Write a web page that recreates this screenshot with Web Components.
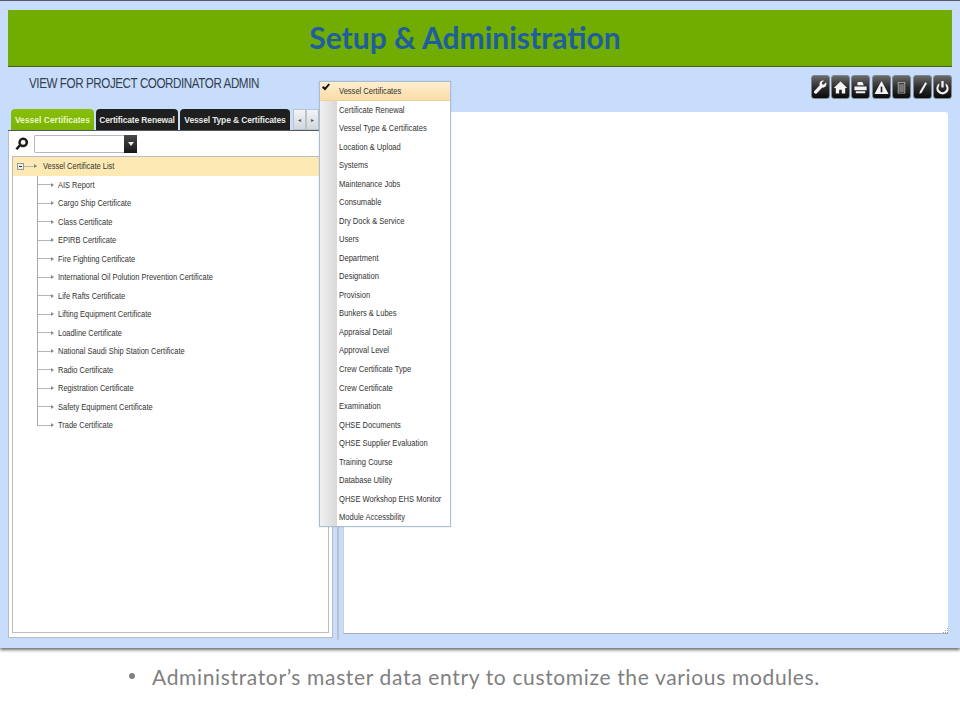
<!DOCTYPE html>
<html>
<head>
<meta charset="utf-8">
<title>Setup &amp; Administration</title>
<style>
  html, body { margin: 0; background: #fff; }
  body { font-family: "Liberation Sans", Arial, sans-serif; }
</style>
</head>
<body>
<admin-slide>
  <admin-toolbar slot="toolbar" label="VIEW FOR PROJECT COORDINATOR ADMIN"></admin-toolbar>
  <cert-panel slot="left">
    <tab-item slot="tabs" active>Vessel Certificates</tab-item>
    <tab-item slot="tabs" w="82">Certificate Renewal</tab-item>
    <tab-item slot="tabs" w="110">Vessel Type &amp; Certificates</tab-item>
    <tree-node root>Vessel Certificate List</tree-node>
    <tree-node>AIS Report</tree-node>
    <tree-node>Cargo Ship Certificate</tree-node>
    <tree-node>Class Certificate</tree-node>
    <tree-node>EPIRB Certificate</tree-node>
    <tree-node>Fire Fighting Certificate</tree-node>
    <tree-node>International Oil Polution Prevention Certificate</tree-node>
    <tree-node>Life Rafts Certificate</tree-node>
    <tree-node>Lifting Equipment Certificate</tree-node>
    <tree-node>Loadline Certificate</tree-node>
    <tree-node>National Saudi Ship Station Certificate</tree-node>
    <tree-node>Radio Certificate</tree-node>
    <tree-node>Registration Certificate</tree-node>
    <tree-node>Safety Equipment Certificate</tree-node>
    <tree-node last>Trade Certificate</tree-node>
  </cert-panel>
  <module-menu slot="menu">
    <menu-row checked>Vessel Certificates</menu-row>
    <menu-row>Certificate Renewal</menu-row>
    <menu-row>Vessel Type &amp; Certificates</menu-row>
    <menu-row>Location &amp; Upload</menu-row>
    <menu-row>Systems</menu-row>
    <menu-row>Maintenance Jobs</menu-row>
    <menu-row>Consumable</menu-row>
    <menu-row>Dry Dock &amp; Service</menu-row>
    <menu-row>Users</menu-row>
    <menu-row>Department</menu-row>
    <menu-row>Designation</menu-row>
    <menu-row>Provision</menu-row>
    <menu-row>Bunkers &amp; Lubes</menu-row>
    <menu-row>Appraisal Detail</menu-row>
    <menu-row>Approval Level</menu-row>
    <menu-row>Crew Certificate Type</menu-row>
    <menu-row>Crew Certificate</menu-row>
    <menu-row>Examination</menu-row>
    <menu-row>QHSE Documents</menu-row>
    <menu-row>QHSE Supplier Evaluation</menu-row>
    <menu-row>Training Course</menu-row>
    <menu-row>Database Utility</menu-row>
    <menu-row>QHSE Workshop EHS Monitor</menu-row>
    <menu-row>Module Accessbility</menu-row>
  </module-menu>
</admin-slide>

<script>
class AdminSlide extends HTMLElement {
    constructor() {
        super();
        this.attachShadow({ mode: "open" });
        this.shadowRoot.innerHTML = `
        <style>
          :host { display: block; width: 960px; height: 720px; overflow: hidden; position: relative; }
          .window {
            box-sizing: border-box;
            height: 648px;
            padding: 9px 8px 0;
            background: #c7ddfb;
            border-top: 1px solid #55585c;
            box-shadow: 0 2px 3px rgba(60,60,60,.75);
          }
          .banner {
            box-sizing: border-box;
            height: 57px;
            background: #70ad00;
            border-bottom: 1px solid #47630f;
            display: flex;
            align-items: center;
            justify-content: center;
            color: #1f5e9e;
            font: bold 30px Lato, sans-serif;
            padding: 0 30px 2px 0;
          }
          .work { display: grid; grid-template-columns: 325px 10px 605px; }
          .split { justify-self: center; width: 2px; height: 532px; margin-top: -1px; background: #b9c3cf; }
          .right {
            box-sizing: border-box;
            height: 522px;
            margin-top: 3px;
            background: #fff;
            border-left: 1px solid #c9d0d8;
            border-bottom: 1px solid #a9adb2;
            border-radius: 3px 3px 0 0;
            display: flex;
            align-items: flex-end;
            justify-content: flex-end;
          }
          .right svg { width: 5px; height: 5px; fill: #9a9ea3; }
          .caption {
            display: flex;
            align-items: center;
            height: 24px;
            margin-top: 16px;
            padding-left: 129px;
            color: #7f7f7f;
            font: 21px Lato, sans-serif;
            letter-spacing: .65px;
          }
          .caption i { width: 6px; height: 6px; border-radius: 50%; background: #808080; margin-right: 17px; }
        </style>
        <div class="window">
          <div class="banner">Setup &amp; Administration</div>
          <slot name="toolbar"></slot>
          <div class="work">
            <slot name="left"></slot>
            <div class="split"></div>
            <div class="right"><svg viewBox="0 0 5 5"><path d="M4 0h1v1H4zM2 2h1v1H2zM4 2h1v1H4zM0 4h1v1H0zM2 4h1v1H2zM4 4h1v1H4z"/></svg></div>
          </div>
        </div>
        <div class="caption"><i></i><span>Administrator’s master data entry to customize the various modules.</span></div>
        <slot name="menu"></slot>
      `;
    }
}

class AdminToolbar extends HTMLElement {
    constructor() {
        super();
        this.attachShadow({ mode: "open" });
        const icons = [
            // wrench
            '<path d="M14 2.500 11.300 5 9.800 4.600 9.300 3 11.800 .6C9.400 0 7 1.700 7 4.200c0 .5.1 1 .2 1.300L1.700 11.500c-.8.8-.8 1.900-.1 2.600s1.800.7 2.600-.1l5.700-6c2.700.8 5.200-2 4.100-5.500z"/>',
            // home
            '<path d="M8 1.500 .8 8.500h2.200v6h3.600V10.500h2.800v4H13v-6h2.200z"/>',
            // tray printer
            '<path d="M5 2h5l1.500 3.500H4.500zM1.500 7h13v4h-13zM3 12h10v2H3z"/>',
            // warning
            '<path d="M8 1 15.500 15H.5zM7.100 7v6h1.800V7z" fill-rule="evenodd"/>',
            // document
            '<path d="M4 2h8v12.500H4zM5 3v10.500h6V3z" fill-rule="evenodd" fill="#b0b0b0"/><path d="M5.500 4.500h5v8.500h-5z" fill="#777"/>',
            // pencil
            '<path d="M11 2.500 12.800 3.500 7 13.500 4.800 15 5 12.500z"/>',
            // power
            '<path d="M6.800 1h2.400v7H6.800zM4.600 3.400v2.700a4.200 4.200 0 1 0 6.800 0V3.400a6.500 6.500 0 1 1-6.800 0z"/>',
        ];
        this.shadowRoot.innerHTML = `
        <style>
          :host { display: flex; justify-content: space-between; align-items: flex-start; height: 42px; }
          .label {
            margin: 8px 0 0 21px;
            color: #33404f;
            font: 14px/16px "Liberation Sans", sans-serif;
            letter-spacing: -.5px;
            white-space: nowrap;
            transform: scaleX(.83);
            transform-origin: left center;
          }
          .btns { display: flex; gap: 1.400px; padding-top: 8px; }
          .btn {
            box-sizing: border-box;
            width: 19px;
            height: 24px;
            display: flex;
            align-items: center;
            justify-content: center;
            background: linear-gradient(#6a6a6a, #2e2e2e 50%, #0a0a0a);
            border-radius: 3px;
            border: 1px solid #7e8690;
          }
          svg { width: 15px; height: 15px; fill: #f4f4f4; flex: none; }
        </style>
        <div class="label"></div>
        <div class="btns">${icons.map((d) => `<span class="btn"><svg viewBox="0 0 16 16">${d}</svg></span>`).join("")}</div>
      `;
        this.shadowRoot.querySelector(".label").textContent = this.getAttribute("label") || "";
    }
}

class TabItem extends HTMLElement {
    constructor() {
        super();
        this.attachShadow({ mode: "open" });
        this.shadowRoot.innerHTML = `
        <style>
          :host {
            box-sizing: border-box;
            display: flex;
            align-items: center;
            justify-content: center;
            height: 21px;
            flex: none;
            white-space: nowrap;
            color: #e6e6e6;
            background: #1f1f1f;
            border-radius: 4px 4px 0 0;
            font: bold 8.500px "Liberation Sans", sans-serif;
            letter-spacing: -.15px;
          }
          :host([active]) { background: linear-gradient(#88bf0c, #7ab404); color: #e9f6c4; width: 83px; letter-spacing: 0; }
        </style>
        <slot></slot>
      `;
    }
    connectedCallback() {
        if (this.hasAttribute("w")) this.style.width = this.getAttribute("w") + "px";
    }
}

class CertPanel extends HTMLElement {
    constructor() {
        super();
        this.attachShadow({ mode: "open" });
        this.shadowRoot.innerHTML = `
        <style>
          :host { display: block; height: 530px; }
          .strip {
            box-sizing: border-box;
            display: flex;
            gap: 2px;
            height: 22px;
            padding-left: 3px;
            border-bottom: 1px solid #555a60;
          }
          .strip slot { display: contents; }
          .scroll { display: flex; margin-left: 1px; height: 21px; }
          .scroll b {
            box-sizing: border-box;
            width: 13px;
            display: flex;
            align-items: center;
            justify-content: center;
            background: linear-gradient(#f2f4f6, #d2d7dc);
            border: 1px solid #bcc3ca;
            color: #555;
            font: 6px "DejaVu Sans", sans-serif;
          }
          .body {
            box-sizing: border-box;
            height: 507px;
            background: #fff;
            border: 1px solid #b9bdc2;
            border-top: 0;
            padding: 0 3px 4px;
            display: flex;
            flex-direction: column;
          }
          .search { display: flex; align-items: center; height: 25px; flex: none; padding-left: 3px; }
          .search svg { width: 13px; height: 14px; fill: #1d1d1d; margin-right: 6px; }
          .input {
            box-sizing: border-box;
            width: 90px;
            height: 18px;
            border: 1px solid #b5b9bd;
            border-right: 0;
            border-radius: 2px 0 0 2px;
            background: #fff;
          }
          .drop {
            width: 13px;
            height: 18px;
            background: linear-gradient(#4a4a4a, #161616);
            display: flex;
            align-items: center;
            justify-content: center;
          }
          .drop i { border: 3px solid transparent; border-top: 4px solid #eee; border-bottom: 0; }
          .tree {
            box-sizing: border-box;
            flex: 1;
            border: 1px solid #b9bdc2;
            padding-bottom: 4px;
          }
        </style>
        <div class="strip">
          <slot name="tabs"></slot>
          <div class="scroll"><b>◂</b><b>▸</b></div>
        </div>
        <div class="body">
          <div class="search">
            <svg viewBox="0 0 16 16"><path d="M10 0a6 6 0 1 1-3.200 11L3 15.500.5 13.500 4.800 8.800A6 6 0 0 1 10 0zm0 3a3 3 0 1 0 0 6 3 3 0 0 0 0-6z" fill-rule="evenodd"/></svg>
            <div class="input"></div><div class="drop"><i></i></div>
          </div>
          <div class="tree"><slot></slot></div>
        </div>
      `;
    }
}

class TreeNode extends HTMLElement {
    constructor() {
        super();
        this.attachShadow({ mode: "open" });
        this.shadowRoot.innerHTML = `
        <style>
          :host {
            display: flex;
            align-items: center;
            height: 18.500px;
            color: #333;
            font: 9px "Liberation Sans", sans-serif;
            white-space: nowrap;
            padding-left: 24px;
          }
          :host([root]) { background: #fde9b4; padding-left: 4px; }
          .text { display: inline-block; transform: scaleX(.83); transform-origin: left center; }
          .line {
            width: 20px;
            align-self: stretch;
            margin-right: 1px;
            position: relative;
            background:
              linear-gradient(#aaa, #aaa) left top / 1px 100% no-repeat,
              linear-gradient(#b5b5b5, #b5b5b5) left center / 14px 1px no-repeat;
          }
          :host([last]) .line {
            background:
              linear-gradient(#aaa, #aaa) left top / 1px 50% no-repeat,
              linear-gradient(#b5b5b5, #b5b5b5) left center / 14px 1px no-repeat;
          }
          .line::after {
            content: "";
            position: absolute;
            left: 14px;
            top: calc(50% - 2px);
            border: 2px solid transparent;
            border-left: 3px solid #888;
            border-right: 0;
          }
          .minus {
            box-sizing: border-box;
            width: 7px;
            height: 7px;
            border: 1px solid #999;
            background: #eee;
            display: flex;
            align-items: center;
            justify-content: center;
            flex: none;
          }
          .minus i { width: 3px; height: 1px; background: #333; }
          .rootline {
            width: 13px;
            height: 1px;
            background: #b5b5b5;
            position: relative;
            margin-right: 6px;
          }
          .rootline::after {
            content: "";
            position: absolute;
            left: 10px;
            top: -2px;
            border: 2px solid transparent;
            border-left: 3px solid #888;
            border-right: 0;
          }
        </style>
        ${this.hasAttribute("root")
            ? '<span class="minus"><i></i></span><span class="rootline"></span>'
            : '<span class="line"></span>'}
        <span class="text"><slot></slot></span>
      `;
    }
}

class ModuleMenu extends HTMLElement {
    constructor() {
        super();
        this.attachShadow({ mode: "open" });
        this.shadowRoot.innerHTML = `
        <style>
          /* floats over the two panels */
          :host {
            position: absolute;
            left: 319px;
            top: 81px;
            box-sizing: border-box;
            width: 132px;
            height: 446px;
            background: linear-gradient(90deg, #f0f0f0, #d9d9d9 13%, #fff 13%);
            border: 1px solid #a9bfd6;
            box-shadow: 0 0 1px rgba(90,110,130,.4);
          }
        </style>
        <slot></slot>
      `;
    }
}

class MenuRow extends HTMLElement {
    constructor() {
        super();
        this.attachShadow({ mode: "open" });
        this.shadowRoot.innerHTML = `
        <style>
          :host {
            display: flex;
            align-items: center;
            height: 18.520px;
            padding-left: 19px;
            color: #333;
            font: 9px "Liberation Sans", sans-serif;
            white-space: nowrap;
            position: relative;
          }
          :host([checked]) { background: linear-gradient(#fdeed0, #fbdca6); border-bottom: 1px solid #e6d4a8; box-sizing: border-box; }
          .text { display: inline-block; transform: scaleX(.84); transform-origin: left center; }
          .tick { position: absolute; left: 2px; top: 1px; width: 8px; height: 8px; fill: #111; }
        </style>
        ${this.hasAttribute("checked") ? '<svg class="tick" viewBox="0 0 8 8"><path d="M0 4.500 1.500 3 3 4.500 6.500 .5 8 1.500 3 7.500z"/></svg>' : ""}
        <span class="text"><slot></slot></span>
      `;
    }
}

customElements.define("admin-slide", AdminSlide);
customElements.define("admin-toolbar", AdminToolbar);
customElements.define("tab-item", TabItem);
customElements.define("cert-panel", CertPanel);
customElements.define("tree-node", TreeNode);
customElements.define("module-menu", ModuleMenu);
customElements.define("menu-row", MenuRow);
</script>
</body>
</html>
